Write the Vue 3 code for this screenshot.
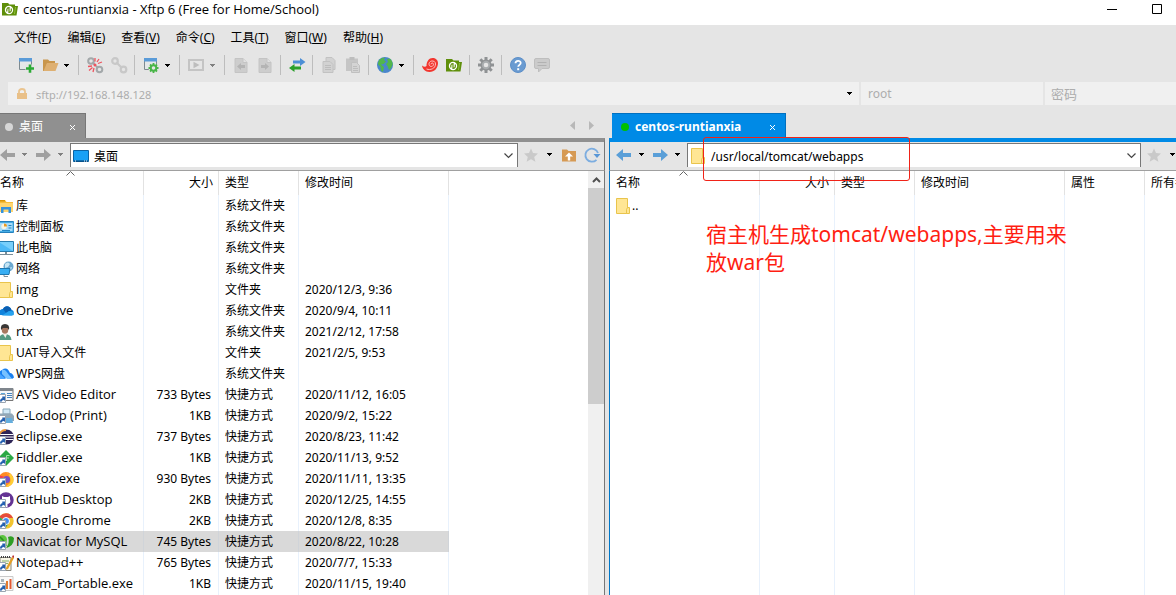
<script setup>
import { ref } from 'vue'

const url = ref('sftp://192.168.148.128')
const user = ref('root')
const password = ref('')
const localPath = ref('桌面')
const remotePath = ref('/usr/local/tomcat/webapps')

const menus = [
  ['文件', 'F'], ['编辑', 'E'], ['查看', 'V'], ['命令', 'C'], ['工具', 'T'], ['窗口', 'W'], ['帮助', 'H'],
]

const caret = '<path d="M0 0h5v1H4v1H3v1H2V2H1V1H0z"/>'
const shortcut = '<path d="M0 7.500h7.500v8H0z" fill="#fff" stroke="#9aa5b1"/><path d="M2 14.500c0-2 .8-3 2.300-3.300V9.500H7V14L5.800 13c-1.200 0-2 .8-2.300 1.800z" fill="#2460b0"/>'
const logo = '<path d="M0 2h6l1.500 1.500H13V5h3l-1.500 9.500H0z" fill="#5f8f0a"/><path d="M13.500 6 12.500 13" stroke="#8fbf3a" fill="none"/><circle cx="7" cy="9" r="4.200" fill="#fff"/><path d="M4.800 10.500V8.500Q5 6.700 7 6.700V11.300Q9.200 11.300 9.300 9.500V7.500" fill="none" stroke="#5f8f0a" stroke-width="1.200"/>'
const folder = '<path d="M1.500.5h11v15h-11z" fill="#ffe694" stroke="#e9c44c"/><path d="M12.500 9.500h2v6h-3v-4z" fill="#ffe694" stroke="#e9c44c"/>'
const doc = '<path d="M2 1.500h8l4 4v10H2z" fill="#cdcdcd" stroke="#c4c4c4"/><path d="M10 1.500v4h4" fill="#e2e2e2" stroke="#c4c4c4"/>'

const icons = {
  logo,
  folder,
  create: '<path d="M1.500 1.500h12v11h-12z" fill="#e4e8ea" stroke="#7e8a90"/><path d="M1 1h13v3.500H1z" fill="#5a9bd8"/><path d="M7.500 7.500h8v8h-8z" fill="#e5e5e5"/><path d="M10.700 7.500h2.600v2.800H16v2.500h-2.700v3h-2.600v-3H8v-2.500h2.700z" fill="#2bab35"/>',
  open: '<path d="M1 2.500h5l1.500 1.500H13v3H5L3 14H1z" fill="#c9964c"/><path d="M5 6h11.500l-3 8H1.500z" fill="#deb072"/>',
  unlink: '<g fill="none" stroke="#a3a8aa" stroke-width="2"><circle cx="4" cy="4" r="2.800"/><circle cx="12.500" cy="12.500" r="2.800"/><path d="m5.500 5.500 2 2M9 9l2 2"/></g><path d="M8 4.500V1M10 5l2-3M11 6.500l4-1.500M1 9.500l4-.5M2 13.500l3.500-3M6 15l1-4" stroke="#ee5560" stroke-width="1.300"/><circle cx="8" cy="8" r="1.500" fill="#ee5560"/>',
  link: '<g fill="none" stroke="#c8c8c8" stroke-width="2.200"><circle cx="4" cy="4" r="2.800"/><circle cx="12.500" cy="12.500" r="2.800"/><path d="m5.500 5.500 5 5"/></g>',
  settings: '<path d="M1.500 1.500h12v11h-12z" fill="#e4e8ea" stroke="#7e8a90"/><path d="M1 1h13v3.500H1z" fill="#5a9bd8"/><circle cx="10.500" cy="11" r="5" fill="#e5e5e5"/><circle cx="10.500" cy="11" r="2.800" fill="none" stroke="#49b548" stroke-width="2"/><path d="M10.500 6v2M10.500 14v2M5.500 11h2M13.500 11h2M7 7.500l1.300 1.300M14 7.500l-1.300 1.300M7 14.500l1.300-1.300M14 14.500l-1.300-1.300" stroke="#49b548" stroke-width="1.800"/>',
  play: '<path d="M1 3h14v10H1z" fill="none" stroke="#c4c4c4" stroke-width="2"/><path d="M5.500 4.800v6.400L11.500 8z" fill="#bdbdbd"/>',
  docLeft: doc + '<path d="M4 9.500 8 6v2h4v3H8v2z" fill="#b4b4b4"/>',
  docRight: doc + '<path d="M12 9.500 8 6v2H4v3h4v2z" fill="#b4b4b4"/>',
  transfer: '<path d="M4 3.500h7V1l5.500 4L11 9V6.500H4z" fill="#4d8fd6"/><path d="M12 9.500H5.500V7L0 11l5.500 4v-2.500H12z" fill="#2ba02b"/>',
  copy: '<path d="M5 .5h6l3 3v9H5z" fill="#d2d2d2" stroke="#c2c2c2"/><path d="M2 4.500h7l3 3v8H2z" fill="#d2d2d2" stroke="#c2c2c2"/><path d="M4 8.500h6M4 10.500h6M4 12.500h6" stroke="#bdbdbd"/>',
  paste: '<path d="M1 1.500h12V14H1z" fill="#c5c5c5"/><path d="M4.500 0h5v3h-5z" fill="#bdbdbd"/><path d="M6.500 5.500h5l3 3v7h-8z" fill="#d4d4d4" stroke="#c0c0c0"/><path d="M8 9.500h4M8 11.500h5M8 13.500h5" stroke="#bdbdbd"/>',
  globe: '<circle cx="8" cy="8" r="8" fill="#4a86cc"/><path d="M2 3Q4 .5 8 .5L7 3l2 1.500L6.500 7 4 7.500 7 10l-1 5-2-1.500L3.500 10 .8 7zM10 2l3-.5Q15.500 4 15.800 7L14 11l-2 2-1.500-4L9 7l2-2z" fill="#52b64c"/>',
  shell: '<path d="M16 6c0 5-3.500 9-8.500 9C3 15 .5 12 0 8.500c2 1.500 3.500 1.500 4.500.5C4.500 4.500 7 1 10.500 1 13.500 1 16 3 16 6z" fill="#f2362f"/><path d="M4.500 12c4 1.500 9-.5 9-5 0-4.200-6.500-4-6.500.2 0 3 4.500 3 4.500.1 0-1.700-2.500-1.700-2.500 0" fill="none" stroke="#ffd0cd" stroke-width=".9"/>',
  gear: '<path d="M8 0v16M0 8h16M2.300 2.300l11.400 11.400M13.700 2.300 2.300 13.700" stroke="#8f9294" stroke-width="3"/><circle cx="8" cy="8" r="5.500" fill="#8f9294"/><circle cx="8" cy="8" r="4.200" fill="#a9adaf"/><circle cx="8" cy="8" r="2.300" fill="#e5e5e5"/>',
  help: '<circle cx="8" cy="8" r="7.500" fill="#6a9bd1" stroke="#5d8fc8"/><path d="M5.500 6.300c0-3.300 5.200-3.200 5.200-.3 0 1.800-2.500 1.900-2.500 3.800" fill="none" stroke="#fff" stroke-width="1.800"/><path d="M7.200 11.200h2v2h-2z" fill="#fff"/>',
  chat: '<path d="M2 1.500h12q1.500 0 1.500 1.500v7q0 1.500-1.500 1.500H8L4.500 15v-3.500H2Q.5 11.500.5 10V3Q.5 1.500 2 1.500z" fill="#cbcbcb" stroke="#bebebe"/><path d="M3.500 5.500h9M3.500 8.500h9" stroke="#b2b2b2"/>',
  back: '<path d="M0 8l7-6v4h8v4H7v4z"/>',
  forward: '<path d="M16 8 9 2v4H1v4h8v4z"/>',
  desktop: '<path d="M.5 2.500h15v11H.5z" fill="#18a0f5" stroke="#0a63a5"/><path d="M1 13h14" stroke="#06406e"/><path d="M2 13h1M11 13h1M13 13h1" stroke="#fff"/>',
  star: '<path d="m8 1.500 2 4.600 5 .5-3.800 3.300 1.200 4.900L8 12.200l-4.400 2.600 1.200-4.900L1 6.600l5-.5z" fill="#c9c9c9"/>',
  up: '<path d="M1 2.500h5L7.500 4H15v10.500H1z" fill="#d69a54"/><path d="M8 5.500 4 9.500H6.800v4h2.400v-4H12z" fill="#fff"/>',
  refresh: '<path d="M12.500 12.800A6.500 6.500 0 1 1 14 6" fill="none" stroke="#7cade0" stroke-width="1.800"/><path d="M9.500 7h7l-3.500 4z" fill="#5a97d6"/>',
  library: '<path d="M0 2h7l1.500 2H15v10H0z" fill="#f4bd3e"/><path d="M0 5h15v9H0z" fill="#ffd670"/><path d="M0 2h7v1.500H0z" fill="#d99404"/><path d="M3 15V9h10v6h-2.500v-3.500h-5V15z" fill="#3592dd"/>',
  panel: '<path d="M0 2.500h15.500v11H0z" fill="#a9dbf8" stroke="#2580bd"/><path d="M1 3.500h14v9H1z" fill="none" stroke="#46ade5"/><circle cx="6" cy="7.500" r="2.700" fill="#f9f4e2"/><path d="M6 4.500v3h3a3 3 0 0 0-3-3z" fill="#ea9b20"/><path d="M10.500 6.500h3M10.500 9h3M4 11.500h8" stroke="#2286c5"/>',
  computer: '<path d="M0 1.500h15.500v10H0z" fill="#4db9f6" stroke="#277cae"/><path d="m1 2 14 0v9z" fill="#78cffb"/><path d="M7 12h2v2h6v1H1v-1h6z" fill="#7b8d98"/>',
  network: '<circle cx="10.500" cy="5.500" r="5" fill="#6ca8cf"/><path d="M7 3q3-3 5 0l-2 3-3 1zM11 7l3-1-1 3z" fill="#c5e5f4"/><path d="M0 7.500h12l-1 6H0z" fill="#37aef3" stroke="#1e78b1"/><path d="M6 14v1.500h4" stroke="#7f919c" fill="none"/>',
  cloud: '<path d="M1 12C0 8 3 6 5 6c2-4 7-3.500 8.500 1 3 0 3 5 0 5.500z" fill="#1183dc"/><path d="M5 6c2-4 7-3.500 8.500 1L8 10z" fill="#0b5fb2"/><path d="M4 12.500 11 8q5 0 5 3.500-.5 1-2 1z" fill="#27a3ef"/>',
  user: '<path d="M1 16q0-6 6-6t6.500 6z" fill="#579a83"/><path d="m5 10 2.500 4L9 10z" fill="#f4ede5"/><ellipse cx="7" cy="5.500" rx="3.300" ry="4.300" fill="#a87860"/><path d="M3 6q-1-6 4-6t4 6L9.500 4H5z" fill="#393735"/>',
  wps: '<path d="M1 12Q0 5 4 4q5-4 8 3 3 0 4 4.500L14 13l-5-4-2 4z" fill="#1a80f0"/><path d="M4 4q2-1 4 1l6 8H9L4 8z" fill="#77c1ff"/><path d="m2 8 6 5H2z" fill="#4aa5ff"/>',
  avs: '<path d="M1 1.500h14v12H1z" fill="#f4f6f8" stroke="#777"/><path d="M1 1h14v3H1z" fill="#7f868d"/><path d="M9 6.500h5M9 8.500h5M9 10.500h5" stroke="#4482bd"/><path d="M3 6h4v4H3z" fill="#5ba7dc"/>' + shortcut,
  printer: '<path d="M5 1h7v5H5z" fill="#cfe7f5" stroke="#86a6b8"/><path d="M2 5.500h12l2 2.500v5H2z" fill="#91a8b8"/><path d="M5 10h9l1 5H6z" fill="#64aede"/>' + shortcut,
  eclipse: '<circle cx="8.500" cy="8" r="7.500" fill="#2e2557"/><path d="M2 5.500h13.500M1.500 8H16M2 10.500h13.500" stroke="#fff" stroke-width="1.200"/><path d="M1 6Q3 1 8 1" stroke="#e99434" stroke-width="2" fill="none"/>' + shortcut,
  fiddler: '<path d="m8 0 8 8-8 8-8-8z" fill="#2ba845"/><path d="M8.500 11V5.500h3M8.500 8h2.500" stroke="#9fe4a9" fill="none"/>' + shortcut,
  firefox: '<circle cx="8" cy="8.500" r="7.500" fill="#ff8a25"/><path d="M8 1q2 1 3 3l1-2q5 5 3 10-3 4-8 4l5-4Q14 6 8 1z" fill="#ffce35"/><circle cx="8.500" cy="8.500" r="3.500" fill="#7850c8"/><path d="M1 4q3 2 5 1L2 10z" fill="#f04054"/>' + shortcut,
  github: '<circle cx="8" cy="8" r="7.700" fill="#633393"/><path d="m4 4 2 1h4l2-1v3q2 5-4 5t-4-5z" fill="#fff"/><path d="M6.500 11h3v4h-3z" fill="#fff"/>' + shortcut,
  chrome: '<circle cx="8" cy="8" r="7.700" fill="#f2c42f"/><path d="M8 8 1 4Q4 .3 8 .3 13 .3 15 5H8z" fill="#e64b3d"/><path d="M8 8 1 4q-3 7 6 11.700L11 10z" fill="#38a755"/><circle cx="8" cy="8" r="3.500" fill="#428af0" stroke="#fff"/>' + shortcut,
  navicat: '<path d="M1 2q6-3 8 3 0 5-2 8-6-2-6-11z" fill="#5cc43f"/><path d="M10 3q4-2 6 1 0 8-8 10 4-5 2-11z" fill="#2e9e24"/><path d="M0 2q6 3 8 10" fill="none" stroke="#2b8f22" stroke-width="1.500"/>' + shortcut,
  notepad: '<path d="M2 2.500h11v13H2z" fill="#f7f5e5" stroke="#88877d"/><path d="M3 2h9" stroke="#444" stroke-width="2" stroke-dasharray="1"/><path d="M4 6h7M4 8.500h6" stroke="#82b26a"/><path d="M8 13 14 2l2 1-6 11-3 1z" fill="#e5a026"/><path d="m14 2 1-2 1 1v2z" fill="#bd3036"/>' + shortcut,
  ocam: '<path d="M1 .500h14v14H1z" fill="#faf9f8" stroke="#c9c9c9"/><path d="M9 5v8" stroke="#e67b30" stroke-width="2"/><path d="M12.500 3v10" stroke="#e25832" stroke-width="2"/><path d="M3 3h3v3H3z" fill="#a9b4bb"/>' + shortcut,
}

const toolGroups = [
  { tools: [['create', '新建'], ['open', '打开']], menu: true },
  { tools: [['unlink', '断开'], ['link', '重新连接']] },
  { tools: [['settings', '属性']], menu: true },
  { tools: [['play', '执行']], menu: true, off: true },
  { tools: [['docLeft', '传到左侧'], ['docRight', '传到右侧']] },
  { tools: [['transfer', '同步']] },
  { tools: [['copy', '复制'], ['paste', '粘贴']] },
  { tools: [['globe', '语言']], menu: true },
  { tools: [['shell', 'Xshell'], ['logo', 'Xftp']] },
  { tools: [['gear', '选项']] },
  { tools: [['help', '帮助'], ['chat', '反馈']] },
]

const sys = '系统文件夹'
const lnk = '快捷方式'
const files = [
  ['library', '库', '', sys, ''],
  ['panel', '控制面板', '', sys, ''],
  ['computer', '此电脑', '', sys, ''],
  ['network', '网络', '', sys, ''],
  ['folder', 'img', '', '文件夹', '2020/12/3, 9:36'],
  ['cloud', 'OneDrive', '', sys, '2020/9/4, 10:11'],
  ['user', 'rtx', '', sys, '2021/2/12, 17:58'],
  ['folder', 'UAT导入文件', '', '文件夹', '2021/2/5, 9:53'],
  ['wps', 'WPS网盘', '', sys, ''],
  ['avs', 'AVS Video Editor', '733 Bytes', lnk, '2020/11/12, 16:05'],
  ['printer', 'C-Lodop (Print)', '1KB', lnk, '2020/9/2, 15:22'],
  ['eclipse', 'eclipse.exe', '737 Bytes', lnk, '2020/8/23, 11:42'],
  ['fiddler', 'Fiddler.exe', '1KB', lnk, '2020/11/13, 9:52'],
  ['firefox', 'firefox.exe', '930 Bytes', lnk, '2020/11/11, 13:35'],
  ['github', 'GitHub Desktop', '2KB', lnk, '2020/12/25, 14:55'],
  ['chrome', 'Google Chrome', '2KB', lnk, '2020/12/8, 8:35'],
  ['navicat', 'Navicat for MySQL', '745 Bytes', lnk, '2020/8/22, 10:28'],
  ['notepad', 'Notepad++', '765 Bytes', lnk, '2020/7/7, 15:33'],
  ['ocam', 'oCam_Portable.exe', '1KB', lnk, '2020/11/15, 19:40'],
]
const selected = ref('Navicat for MySQL')
const isLatin = (s) => /^[\x20-\x7e]+$/.test(s)
</script>

<template>
  <div class="window">
    <header class="titlebar">
      <svg class="icon" viewBox="0 0 16 16" v-html="icons.logo"></svg>
      <h1 class="latin">centos-runtianxia - Xftp 6 (Free for Home/School)</h1>
      <button class="win-btn" aria-label="最小化"><svg class="win-icon" viewBox="0 0 10 10"><path d="M0 5.500h10" /></svg></button>
      <button class="win-btn" aria-label="最大化"><svg class="win-icon" viewBox="0 0 10 10"><path d="M.5.500h9v9h-9z" /></svg></button>
    </header>

    <nav class="menubar">
      <button v-for="[name, key] in menus" :key="key">{{ name }}(<u>{{ key }}</u>)</button>
    </nav>

    <div class="toolbar">
      <div v-for="(g, i) in toolGroups" :key="i" class="group">
        <button v-for="[id, label] in g.tools" :key="id" class="tool" :aria-label="label">
          <svg class="icon" viewBox="0 0 16 16" v-html="icons[id]"></svg>
        </button>
        <button v-if="g.menu" class="drop" :class="{ off: g.off }" aria-label="更多">
          <svg class="caret" viewBox="0 0 5 3" v-html="caret"></svg>
        </button>
      </div>
    </div>

    <div class="address">
      <div class="field host">
        <svg class="lock" viewBox="0 0 10 12"><path d="M2 6V3.500Q2 1 5 1t3 2.500V6" fill="none" stroke="#eac48f" stroke-width="1.800" /><path d="M0 5h10v6H0z" fill="#e9c088" /></svg>
        <input v-model="url" aria-label="主机" />
        <button class="drop" aria-label="历史"><svg class="caret" viewBox="0 0 5 3" v-html="caret"></svg></button>
      </div>
      <div class="field"><input v-model="user" aria-label="用户名" /></div>
      <div class="field secret"><input v-model="password" type="password" placeholder="密码" aria-label="密码" /></div>
    </div>

    <main class="panes">
      <section class="pane local">
        <div class="tabs">
          <button class="tab"><i class="dot"></i><span>桌面</span><svg class="close" viewBox="0 0 7 7"><path d="m1 1 5 5m0-5-5 5" /></svg></button>
          <div class="scroll-tabs">
            <button aria-label="向左"><svg viewBox="0 0 5 9"><path d="M5 0v9L0 4.500z" /></svg></button>
            <button aria-label="向右"><svg viewBox="0 0 5 9"><path d="M0 0v9l5-4.500z" /></svg></button>
          </div>
        </div>
        <div class="pathbar">
          <button class="nav" aria-label="后退"><svg class="icon" viewBox="0 0 16 16" v-html="icons.back"></svg></button>
          <button class="drop off" aria-label="后退历史"><svg class="caret" viewBox="0 0 5 3" v-html="caret"></svg></button>
          <button class="nav" aria-label="前进"><svg class="icon" viewBox="0 0 16 16" v-html="icons.forward"></svg></button>
          <button class="drop off" aria-label="前进历史"><svg class="caret" viewBox="0 0 5 3" v-html="caret"></svg></button>
          <div class="combo">
            <svg class="icon" viewBox="0 0 16 16" v-html="icons.desktop"></svg>
            <input v-model="localPath" aria-label="本地路径" />
            <button aria-label="展开"><svg class="chev" viewBox="0 0 9 6"><path d="m.5.500 4 4 4-4" /></svg></button>
          </div>
          <div class="actions">
            <button aria-label="收藏"><svg class="icon" viewBox="0 0 16 16" v-html="icons.star"></svg></button>
            <button class="drop" aria-label="收藏夹"><svg class="caret" viewBox="0 0 5 3" v-html="caret"></svg></button>
            <button aria-label="上一级"><svg class="icon" viewBox="0 0 16 16" v-html="icons.up"></svg></button>
            <button aria-label="刷新"><svg class="icon" viewBox="0 0 16 16" v-html="icons.refresh"></svg></button>
          </div>
        </div>
        <div class="list">
          <table>
            <colgroup><col class="w-first" /><col class="w-size" /><col class="w-type" /><col class="w-date" /><col /></colgroup>
            <thead>
              <tr>
                <th>名称<svg class="sort" viewBox="0 0 9 5"><path d="m.5 4.500 4-4 4 4" /></svg></th>
                <th class="num">大小</th><th>类型</th><th>修改时间</th><th class="blank"></th>
              </tr>
            </thead>
            <tbody>
              <tr v-for="f in files" :key="f[1]" :class="{ selected: f[1] === selected }" @click="selected = f[1]">
                <td><div class="name"><svg viewBox="2 0 14 16" v-html="icons[f[0]]"></svg><span :class="{ latin: isLatin(f[1]) }">{{ f[1] }}</span></div></td>
                <td class="num">{{ f[2] }}</td><td>{{ f[3] }}</td><td>{{ f[4] }}</td><td class="blank"></td>
              </tr>
              <tr class="rest"><td></td><td></td><td></td><td></td><td class="blank"></td></tr>
            </tbody>
          </table>
          <div class="scrollbar">
            <button aria-label="向上滚动"><svg viewBox="0 0 9 6"><path d="m1 5 3.500-3.500L8 5" /></svg></button>
            <div class="thumb"></div>
          </div>
        </div>
      </section>

      <section class="pane remote">
        <div class="tabs">
          <button class="tab"><i class="dot"></i><span>centos-runtianxia</span><svg class="close" viewBox="0 0 7 7"><path d="m1 1 5 5m0-5-5 5" /></svg></button>
        </div>
        <div class="pathbar">
          <button class="nav" aria-label="后退"><svg class="icon" viewBox="0 0 16 16" v-html="icons.back"></svg></button>
          <button class="drop" aria-label="后退历史"><svg class="caret" viewBox="0 0 5 3" v-html="caret"></svg></button>
          <button class="nav" aria-label="前进"><svg class="icon" viewBox="0 0 16 16" v-html="icons.forward"></svg></button>
          <button class="drop" aria-label="前进历史"><svg class="caret" viewBox="0 0 5 3" v-html="caret"></svg></button>
          <div class="combo">
            <svg class="icon" viewBox="0 0 16 16" v-html="icons.folder"></svg>
            <input v-model="remotePath" aria-label="远程路径" />
            <button aria-label="展开"><svg class="chev" viewBox="0 0 9 6"><path d="m.5.500 4 4 4-4" /></svg></button>
          </div>
          <div class="actions">
            <button aria-label="收藏"><svg class="icon" viewBox="0 0 16 16" v-html="icons.star"></svg></button>
            <button class="drop" aria-label="收藏夹"><svg class="caret" viewBox="0 0 5 3" v-html="caret"></svg></button>
          </div>
        </div>
        <div class="list">
          <table>
            <colgroup><col class="w-first" /><col class="w-size" /><col class="w-type" /><col class="w-date" /><col class="w-type" /><col class="w-owner" /></colgroup>
            <thead>
              <tr>
                <th>名称<svg class="sort" viewBox="0 0 9 5"><path d="m.5 4.500 4-4 4 4" /></svg></th>
                <th class="num">大小</th><th>类型</th><th>修改时间</th><th>属性</th><th class="blank">所有者</th>
              </tr>
            </thead>
            <tbody>
              <tr>
                <td><div class="name"><svg viewBox="1 0 14 16" v-html="icons.folder"></svg>..</div></td>
                <td></td><td></td><td></td><td></td><td class="blank"></td>
              </tr>
              <tr class="rest"><td></td><td></td><td></td><td></td><td></td><td class="blank"></td></tr>
            </tbody>
          </table>
        </div>
        <div class="mark"></div>
        <p class="note">宿主机生成tomcat/webapps,主要用来<br />放war包</p>
      </section>
    </main>
  </div>
</template>

<style>
html, body { margin: 0; overflow: hidden; }
</style>

<style scoped>
.window {
  display: flex;
  flex-direction: column;
  height: 100vh;
  overflow: hidden;
  background: #e5e5e5;
  color: #000;
  font: 12px/16px "Noto Sans", "Noto Sans CJK SC", sans-serif;
}
button, input {
  margin: 0;
  padding: 0;
  border: 0;
  background: none;
  color: inherit;
  font: inherit;
  outline: none;
}
input { flex: 1; min-width: 0; }
svg { display: block; flex: none; }
.latin { font-family: "Open Sans", "Noto Sans CJK SC", sans-serif; font-size: 13px; }
.icon { width: 16px; height: 16px; overflow: visible; }
.caret { width: 5px; height: 3px; fill: #000; }
.drop { display: flex; justify-content: center; align-items: center; width: 8px; }
.drop.off .caret { fill: #808080; }

.titlebar { display: flex; align-items: flex-start; height: 25px; padding: 1px 8px 0 2px; background: #fff; box-sizing: border-box; }
.titlebar h1 { flex: 1; margin: 0 0 0 5px; font-weight: 400; line-height: 16px; }
.win-btn { width: 22px; height: 16px; margin-left: 23px; display: flex; justify-content: center; align-items: center; }
.win-icon { width: 10px; height: 10px; fill: none; stroke: #000; }

.menubar { display: flex; gap: 16px; padding: 5px 14px 0; height: 26px; box-sizing: border-box; align-items: flex-start; }
.menubar button { white-space: nowrap; }

.toolbar { display: flex; height: 31px; padding: 2px 14px 5px; box-sizing: border-box; }
.group { display: flex; align-items: center; }
.group + .group::before { content: ""; width: 1px; height: 20px; margin: 0 4px 0 3px; background: #bdbdbd; }
.group .drop { margin-right: 5px; }
.tool { width: 24px; height: 24px; display: flex; justify-content: center; align-items: center; }

.address { display: grid; grid-template-columns: 851fr 182fr 131fr; gap: 2px; height: 23px; padding-left: 8px; }
.field { display: flex; align-items: center; min-width: 0; padding: 0 7px; background: #f0f0f0; color: #adadad; }
.field input::placeholder { color: #adadad; opacity: 1; }
.host { padding: 0 6px; }
.host input { padding-top: 2px; font-size: 11px; }
.secret { padding: 0 6px; }
.secret input { font-size: 13px; }
.lock { width: 10px; height: 12px; margin: 0 9px 0 3px; }

.panes { flex: 1; min-height: 0; display: grid; grid-template-columns: 605fr 567fr; column-gap: 4px; padding-top: 8px; }
.pane { position: relative; display: flex; flex-direction: column; min-width: 0; min-height: 0; }
.tabs { display: flex; height: 25px; }
.tab { display: flex; align-items: center; border: 1px solid #777; border-width: 1px 1px 0 0; background: #909090; color: #fff; padding-top: 2px; }
.tab .dot { width: 8px; height: 8px; border-radius: 50%; background: #d6d6d6; }
.tab span { flex: 1; text-align: left; padding-left: 6px; }
.close { width: 7px; height: 7px; fill: none; stroke: #fff; }
.local .tab { width: 86px; padding-left: 5px; padding-right: 9px; }
.remote .tab { width: 174px; margin-left: 3px; padding-left: 9px; padding-right: 9px; background: #008ae6; border-color: #0070c0; font-weight: 700; }
.remote .dot { background: #00c000; }
.scroll-tabs { display: flex; align-items: center; gap: 14px; margin-left: auto; padding-right: 11px; }
.scroll-tabs svg { width: 5px; height: 9px; fill: #b8b8b8; }

.pathbar { display: flex; align-items: stretch; height: 33px; padding-bottom: 3px; box-sizing: border-box; border-top: 4px solid #909090; border-right: 1px solid #777; border-bottom: 1px solid #a0a0a0; }
.remote .pathbar { border-top-color: #008ae6; border-left: 1px solid #0078c8; border-right: 0; padding-left: 6px; }
.pathbar > .nav { display: flex; align-items: center; width: 16px; fill: #a0a0a0; }
.pathbar > .drop { width: 20px; }
.pathbar > .nav + .drop { padding-right: 1px; }
.pathbar > .nav ~ .nav + .drop { width: 19px; }
.remote .nav { fill: #5a9fd8; }
.local .nav:first-child { width: 15px; }
.combo { flex: 1; min-width: 0; display: flex; align-items: center; gap: 5px; margin-top: 1px; padding: 0 4px 0 2px; background: #fff; border: 1px solid #777; border-bottom: 0; }
.combo input { padding-top: 2px; }
.chev { width: 9px; height: 6px; fill: none; stroke: #444; stroke-width: 1.200; }
.actions { display: flex; align-items: center; gap: 7px; padding: 0 4px 0 5px; }
.actions .drop { margin: 0 1px 0 -1px; }
.remote .actions { padding-right: 0; }
.remote .actions .drop { margin-right: 0; }

.list { flex: 1; min-height: 0; display: flex; overflow: hidden; background: #fff; }
.local .list { border-right: 1px solid #777; }
.remote .list { border-left: 1px solid #0078c8; }
table { flex: 1; min-width: 0; height: 100%; table-layout: fixed; border-collapse: separate; border-spacing: 0; }
.remote table { min-width: 615px; }
.w-first { width: 144px; }
.remote .w-first { width: 150px; }
.w-size { width: 75px; }
.w-type, .w-owner { width: 80px; }
.w-date { width: 150px; }
th, td { padding: 0 6px; border-right: 1px solid #e8f1fc; text-align: left; font-weight: 400; white-space: nowrap; overflow: hidden; }
th { position: relative; height: 24px; border-color: #e2e2e2; }
td { height: 21px; }
th:first-child, td:first-child { padding-left: 0; }
.remote th:first-child, .remote td:first-child { padding-left: 6px; }
th.num { padding-right: 5px; text-align: right; }
td.num { padding-right: 7px; text-align: right; }
.blank { border-right: 0; }
.rest td { height: auto; }
.selected td:not(.blank) { background: #d9d9d9; border-color: #d0d4d9; }
.sort { position: absolute; top: 0; left: 50%; width: 9px; height: 5px; margin-left: -6px; fill: none; stroke: #666; }
.name { display: flex; align-items: center; gap: 2px; height: 21px; }
.name svg { width: 14px; height: 16px; }
.name .latin { padding-bottom: 2px; }
.scrollbar { width: 16px; background: #f0f0f0; display: flex; flex-direction: column; }
.scrollbar button { display: flex; justify-content: center; align-items: center; height: 17px; }
.scrollbar svg { width: 9px; height: 6px; fill: none; stroke: #505050; stroke-width: 2; }
.thumb { height: 51%; background: #cdcdcd; }

.mark { position: absolute; left: 94px; top: 24px; width: 207px; height: 44px; box-sizing: border-box; border: 1px solid #f02318; border-radius: 3px; }
.note { position: absolute; left: 97px; top: 107px; margin: 0; color: #ff1e12; font-size: 21px; line-height: 28px; white-space: nowrap; }
</style>
